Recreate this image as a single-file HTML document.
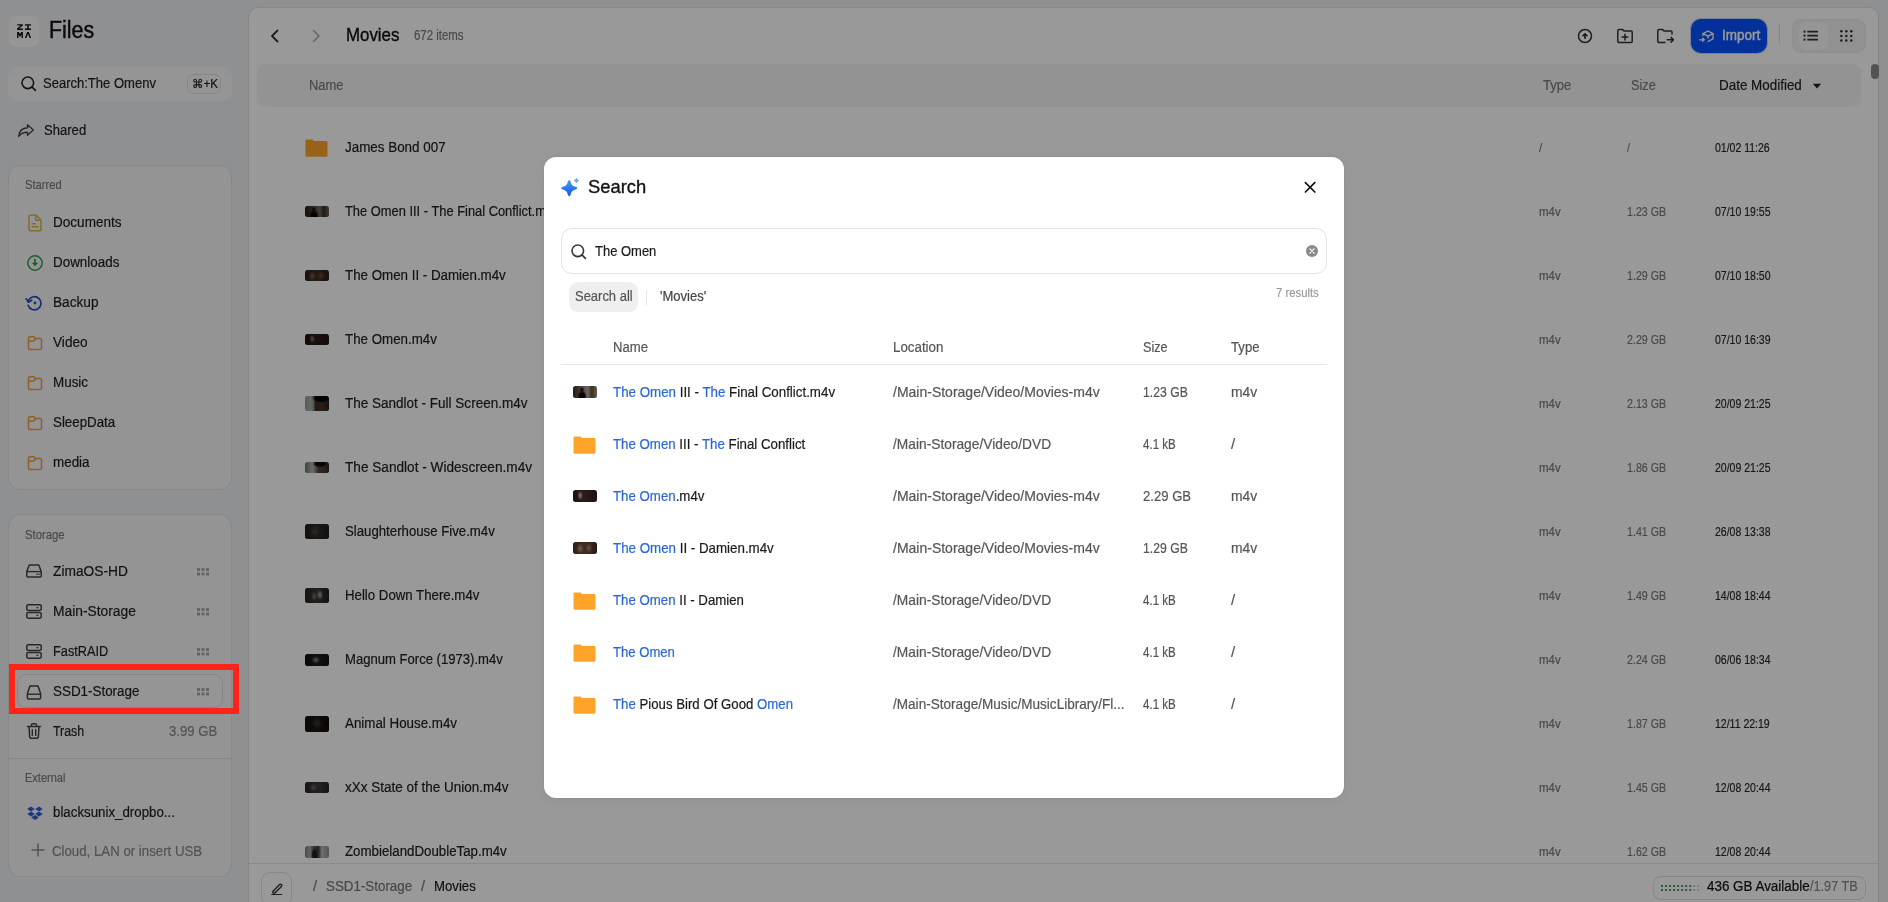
<!DOCTYPE html>
<html><head><meta charset="utf-8"><title>Files</title>
<style>
html,body{margin:0;padding:0;}
body{width:1888px;height:902px;position:relative;overflow:hidden;background:#eff0f2;font-family:"Liberation Sans", sans-serif;}
.t{position:absolute;white-space:nowrap;line-height:1;transform-origin:0 0;-webkit-text-stroke-width:0.2px;}
.g{filter:grayscale(1);}
.c{filter:saturate(1.0001);}
svg{display:block;}
</style></head><body>
<div style="position:absolute;left:9px;top:16px;width:30px;height:31px;background:#fbfbfb;border-radius:7px;box-shadow:0 0 0 1px #f0f0f0;"></div>
<svg style="position:absolute;left:17px;top:24px;" width="14" height="14" viewBox="0 0 14 14" fill="none"><path d="M0.3 0.2H5.8V1.5L2.2 4.5H5.9V5.9H0.1V4.6L3.7 1.6H0.3Z" fill="#111"/><path d="M7.9 0.2H14V1.6H11.7V4.5H14V5.9H7.9V4.5H10.2V1.6H7.9Z" fill="#111"/><path d="M0.1 14V8H1.9L3 10.3L4.1 8H5.9V14H4.5V10.6L3 13L1.5 10.6V14Z" fill="#111"/><path d="M7.9 14L10.1 8H11.9L14.1 14H12.6L11 9.8L9.4 14Z" fill="#111"/></svg>
<div class="t c" style="left:48.50px;top:18.42px;font-size:24.08px;color:#111;transform:scaleX(0.8883);-webkit-text-stroke:0.45px #111;">Files</div>
<div style="position:absolute;left:8px;top:67px;width:224px;height:34px;background:#f8f8f8;border-radius:10px;"></div>
<svg style="position:absolute;left:20px;top:75px;" width="17" height="17" viewBox="0 0 17 17" fill="none"><circle cx="7.8" cy="7.8" r="5.8" stroke="#222" stroke-width="1.6"/><path d="M12.2 12.2L15.4 15.4" stroke="#222" stroke-width="1.7" stroke-linecap="round"/></svg>
<div class="t c" style="left:43.00px;top:75.77px;font-size:14.45px;color:#1f1f1f;transform:scaleX(0.9019);">Search:The Omenv</div>
<div style="position:absolute;left:187px;top:74px;width:34px;height:20px;border:1px solid #e0e0e0;border-radius:6px;box-sizing:border-box;background:#f8f8f8;"></div>
<div class="t c" style="left:192.40px;top:77.98px;font-size:12.31px;color:#222;transform:scaleX(0.9508);">&#8984;+K</div>
<svg style="position:absolute;left:17px;top:123px;" width="18" height="15" viewBox="0 0 18 15" fill="none"><path d="M10.5 1.8L16.3 7L10.5 12.2V9.2C6.2 9.2 3.6 10.4 1.6 13.4C2 8.8 4.8 5.2 10.5 4.8Z" stroke="#444" stroke-width="1.4" stroke-linejoin="round"/></svg>
<div class="t c" style="left:44.30px;top:123.27px;font-size:14.45px;color:#1f1f1f;transform:scaleX(0.9056);">Shared</div>
<div style="position:absolute;left:8px;top:165px;width:224px;height:325px;background:#f7f7f7;border:1px solid #e2e2e2;border-radius:12px;box-sizing:border-box;"></div>
<div class="t c" style="left:25.20px;top:179.13px;font-size:12.84px;color:#7a7a7a;transform:scaleX(0.8757);">Starred</div>
<div class="t c" style="left:52.90px;top:214.77px;font-size:14.45px;color:#1f1f1f;transform:scaleX(0.9387);">Documents</div>
<div class="t c" style="left:52.90px;top:254.77px;font-size:14.45px;color:#1f1f1f;transform:scaleX(0.9288);">Downloads</div>
<div class="t c" style="left:52.90px;top:294.77px;font-size:14.45px;color:#1f1f1f;transform:scaleX(0.9461);">Backup</div>
<div class="t c" style="left:52.90px;top:334.77px;font-size:14.45px;color:#1f1f1f;transform:scaleX(0.9456);">Video</div>
<div class="t c" style="left:52.90px;top:374.77px;font-size:14.45px;color:#1f1f1f;transform:scaleX(0.9302);">Music</div>
<div class="t c" style="left:52.90px;top:414.77px;font-size:14.45px;color:#1f1f1f;transform:scaleX(0.9217);">SleepData</div>
<div class="t c" style="left:52.90px;top:454.77px;font-size:14.45px;color:#1f1f1f;transform:scaleX(0.9299);">media</div>
<svg style="position:absolute;left:26px;top:214px;" width="18" height="18" viewBox="0 0 18 18" fill="none"><path d="M3 2.4C3 1.7 3.5 1.2 4.2 1.2H10.2L15 6V15.6C15 16.3 14.5 16.8 13.8 16.8H4.2C3.5 16.8 3 16.3 3 15.6Z" stroke="#d8b24a" stroke-width="1.5" stroke-linejoin="round"/><path d="M9.8 1.5V6.3H14.7" stroke="#d8b24a" stroke-width="1.4"/><path d="M6 9.8H9M6 12.8H12" stroke="#d8b24a" stroke-width="1.5" stroke-linecap="round"/></svg>
<svg style="position:absolute;left:26px;top:254px;" width="18" height="18" viewBox="0 0 18 18" fill="none"><circle cx="9" cy="9" r="7.2" stroke="#2f9e58" stroke-width="1.5"/><path d="M9 5.4V9.6" stroke="#2f9e58" stroke-width="1.7" stroke-linecap="round"/><path d="M6.3 8.9L9 11.9L11.7 8.9Z" fill="#2f9e58" stroke="#2f9e58" stroke-width="0.6" stroke-linejoin="round"/></svg>
<svg style="position:absolute;left:25px;top:294px;" width="19" height="18" viewBox="0 0 19 18" fill="none"><path d="M3.6 6.2A6.6 6.6 0 1 1 3.2 11.4" stroke="#1f4fc9" stroke-width="1.7" stroke-linecap="round"/><path d="M1.2 4.8L3.4 8.2L6.6 6.2" stroke="#1f4fc9" stroke-width="1.7" stroke-linecap="round" stroke-linejoin="round"/><circle cx="10" cy="9" r="1.4" fill="#1f4fc9"/></svg>
<svg style="position:absolute;left:26px;top:334px;" width="18" height="18" viewBox="0 0 18 18" fill="none"><path d="M2.5 14.2V4C2.5 3.2 3 2.7 3.8 2.7H7.4C7.9 2.7 8.2 2.9 8.5 3.3L9.3 4.5H14.2C15 4.5 15.5 5 15.5 5.8V14.2C15.5 15 15 15.5 14.2 15.5H3.8C3 15.5 2.5 15 2.5 14.2Z" stroke="#e8a24c" stroke-width="1.5" stroke-linejoin="round"/><path d="M2.6 7H7.6C8 7 8.3 6.8 8.5 6.5L9.4 4.6" stroke="#e8a24c" stroke-width="1.4" stroke-linejoin="round"/></svg>
<svg style="position:absolute;left:26px;top:374px;" width="18" height="18" viewBox="0 0 18 18" fill="none"><path d="M2.5 14.2V4C2.5 3.2 3 2.7 3.8 2.7H7.4C7.9 2.7 8.2 2.9 8.5 3.3L9.3 4.5H14.2C15 4.5 15.5 5 15.5 5.8V14.2C15.5 15 15 15.5 14.2 15.5H3.8C3 15.5 2.5 15 2.5 14.2Z" stroke="#e8a24c" stroke-width="1.5" stroke-linejoin="round"/><path d="M2.6 7H7.6C8 7 8.3 6.8 8.5 6.5L9.4 4.6" stroke="#e8a24c" stroke-width="1.4" stroke-linejoin="round"/></svg>
<svg style="position:absolute;left:26px;top:414px;" width="18" height="18" viewBox="0 0 18 18" fill="none"><path d="M2.5 14.2V4C2.5 3.2 3 2.7 3.8 2.7H7.4C7.9 2.7 8.2 2.9 8.5 3.3L9.3 4.5H14.2C15 4.5 15.5 5 15.5 5.8V14.2C15.5 15 15 15.5 14.2 15.5H3.8C3 15.5 2.5 15 2.5 14.2Z" stroke="#e8a24c" stroke-width="1.5" stroke-linejoin="round"/><path d="M2.6 7H7.6C8 7 8.3 6.8 8.5 6.5L9.4 4.6" stroke="#e8a24c" stroke-width="1.4" stroke-linejoin="round"/></svg>
<svg style="position:absolute;left:26px;top:454px;" width="18" height="18" viewBox="0 0 18 18" fill="none"><path d="M2.5 14.2V4C2.5 3.2 3 2.7 3.8 2.7H7.4C7.9 2.7 8.2 2.9 8.5 3.3L9.3 4.5H14.2C15 4.5 15.5 5 15.5 5.8V14.2C15.5 15 15 15.5 14.2 15.5H3.8C3 15.5 2.5 15 2.5 14.2Z" stroke="#e8a24c" stroke-width="1.5" stroke-linejoin="round"/><path d="M2.6 7H7.6C8 7 8.3 6.8 8.5 6.5L9.4 4.6" stroke="#e8a24c" stroke-width="1.4" stroke-linejoin="round"/></svg>
<div style="position:absolute;left:8px;top:514px;width:224px;height:363px;background:#f7f7f7;border:1px solid #e2e2e2;border-radius:12px;box-sizing:border-box;"></div>
<div class="t c" style="left:25.40px;top:528.63px;font-size:12.84px;color:#7a7a7a;transform:scaleX(0.8798);">Storage</div>
<div style="position:absolute;left:8px;top:758px;width:224px;height:1px;background:#e2e2e2;"></div>
<div style="position:absolute;left:17px;top:674px;width:206px;height:34px;background:#f9f9f9;border:1px solid #dedede;border-radius:9px;box-sizing:border-box;"></div>
<div class="t c" style="left:53.00px;top:563.77px;font-size:14.45px;color:#1f1f1f;transform:scaleX(0.9521);">ZimaOS-HD</div>
<svg style="position:absolute;left:197px;top:567.5px;" width="13" height="8" viewBox="0 0 13 8" fill="none"><rect x="0.0" y="0.0" width="3" height="3" fill="#ababab"/><rect x="0.0" y="4.5" width="3" height="3" fill="#ababab"/><rect x="4.5" y="0.0" width="3" height="3" fill="#ababab"/><rect x="4.5" y="4.5" width="3" height="3" fill="#ababab"/><rect x="9.0" y="0.0" width="3" height="3" fill="#ababab"/><rect x="9.0" y="4.5" width="3" height="3" fill="#ababab"/></svg>
<div class="t c" style="left:53.00px;top:603.77px;font-size:14.45px;color:#1f1f1f;transform:scaleX(0.9557);">Main-Storage</div>
<svg style="position:absolute;left:197px;top:607.5px;" width="13" height="8" viewBox="0 0 13 8" fill="none"><rect x="0.0" y="0.0" width="3" height="3" fill="#ababab"/><rect x="0.0" y="4.5" width="3" height="3" fill="#ababab"/><rect x="4.5" y="0.0" width="3" height="3" fill="#ababab"/><rect x="4.5" y="4.5" width="3" height="3" fill="#ababab"/><rect x="9.0" y="0.0" width="3" height="3" fill="#ababab"/><rect x="9.0" y="4.5" width="3" height="3" fill="#ababab"/></svg>
<div class="t c" style="left:53.00px;top:643.77px;font-size:14.45px;color:#1f1f1f;transform:scaleX(0.8830);">FastRAID</div>
<svg style="position:absolute;left:197px;top:647.5px;" width="13" height="8" viewBox="0 0 13 8" fill="none"><rect x="0.0" y="0.0" width="3" height="3" fill="#ababab"/><rect x="0.0" y="4.5" width="3" height="3" fill="#ababab"/><rect x="4.5" y="0.0" width="3" height="3" fill="#ababab"/><rect x="4.5" y="4.5" width="3" height="3" fill="#ababab"/><rect x="9.0" y="0.0" width="3" height="3" fill="#ababab"/><rect x="9.0" y="4.5" width="3" height="3" fill="#ababab"/></svg>
<div class="t c" style="left:53.00px;top:683.77px;font-size:14.45px;color:#1f1f1f;transform:scaleX(0.9284);">SSD1-Storage</div>
<svg style="position:absolute;left:197px;top:687.5px;" width="13" height="8" viewBox="0 0 13 8" fill="none"><rect x="0.0" y="0.0" width="3" height="3" fill="#ababab"/><rect x="0.0" y="4.5" width="3" height="3" fill="#ababab"/><rect x="4.5" y="0.0" width="3" height="3" fill="#ababab"/><rect x="4.5" y="4.5" width="3" height="3" fill="#ababab"/><rect x="9.0" y="0.0" width="3" height="3" fill="#ababab"/><rect x="9.0" y="4.5" width="3" height="3" fill="#ababab"/></svg>
<svg style="position:absolute;left:25px;top:563px;" width="18" height="16" viewBox="0 0 18 16" fill="none"><path d="M4.2 2H13.8L16.2 8.6V13C16.2 13.6 15.8 14 15.2 14H2.8C2.2 14 1.8 13.6 1.8 13V8.6Z" stroke="#444" stroke-width="1.5" stroke-linejoin="round"/><path d="M1.9 8.6H16.1" stroke="#444" stroke-width="1.4"/><circle cx="12" cy="11.3" r="0.8" fill="#444"/><circle cx="14" cy="11.3" r="0.8" fill="#444"/></svg>
<svg style="position:absolute;left:25px;top:602.5px;" width="18" height="17" viewBox="0 0 18 17" fill="none"><rect x="1.8" y="1.8" width="14.4" height="5.6" rx="1.4" stroke="#444" stroke-width="1.5"/><rect x="1.8" y="9.6" width="14.4" height="5.6" rx="1.4" stroke="#444" stroke-width="1.5"/><path d="M11.5 4.6H13.3M11.5 12.4H13.3" stroke="#444" stroke-width="1.3"/></svg>
<svg style="position:absolute;left:25px;top:642.5px;" width="18" height="17" viewBox="0 0 18 17" fill="none"><rect x="1.8" y="1.8" width="14.4" height="5.6" rx="1.4" stroke="#444" stroke-width="1.5"/><rect x="1.8" y="9.6" width="14.4" height="5.6" rx="1.4" stroke="#444" stroke-width="1.5"/><path d="M11.5 4.6H13.3M11.5 12.4H13.3" stroke="#444" stroke-width="1.3"/></svg>
<svg style="position:absolute;left:25px;top:684px;" width="18" height="17" viewBox="0 0 18 17" fill="none"><path d="M5 2H13L15.6 9.6V14C15.6 14.6 15.2 15 14.6 15H3.4C2.8 15 2.4 14.6 2.4 14V9.6Z" stroke="#444" stroke-width="1.5" stroke-linejoin="round"/><path d="M2.6 10.2H15.4" stroke="#444" stroke-width="1.4"/></svg>
<div class="t c" style="left:53.30px;top:723.77px;font-size:14.45px;color:#1f1f1f;transform:scaleX(0.8571);">Trash</div>
<div class="t c" style="left:168.50px;top:723.77px;font-size:14.45px;color:#8a8a8a;transform:scaleX(0.9091);">3.99 GB</div>
<svg style="position:absolute;left:25px;top:722px;" width="18" height="18" viewBox="0 0 18 18" fill="none"><path d="M2.5 4.5H15.5" stroke="#444" stroke-width="1.5" stroke-linecap="round"/><path d="M6.5 4.2V2.6C6.5 2.1 6.9 1.7 7.4 1.7H10.6C11.1 1.7 11.5 2.1 11.5 2.6V4.2" stroke="#444" stroke-width="1.4"/><path d="M4 4.8L4.7 15.2C4.8 15.9 5.2 16.3 5.9 16.3H12.1C12.8 16.3 13.2 15.9 13.3 15.2L14 4.8" stroke="#444" stroke-width="1.5"/><path d="M7.3 7.6V13.4M10.7 7.6V13.4" stroke="#444" stroke-width="1.4" stroke-linecap="round"/></svg>
<div class="t c" style="left:25.00px;top:772.13px;font-size:12.84px;color:#7a7a7a;transform:scaleX(0.8591);">External</div>
<svg style="position:absolute;left:26px;top:805px;" width="18" height="16" viewBox="0 0 18 16" fill="none"><path d="M5 1.6L1.2 4.1L5 6.6L8.8 4.1ZM13 1.6L9.2 4.1L13 6.6L16.8 4.1ZM5 6.6L1.2 9.1L5 11.6L8.8 9.1ZM13 6.6L9.2 9.1L13 11.6L16.8 9.1ZM9 9.9L5.2 12.4L9 14.9L12.8 12.4Z" fill="#2f5fd0"/></svg>
<div class="t c" style="left:53.30px;top:804.77px;font-size:14.45px;color:#1f1f1f;transform:scaleX(0.9205);">blacksunix_dropbo...</div>
<svg style="position:absolute;left:30px;top:842px;" width="16" height="16" viewBox="0 0 16 16" fill="none"><path d="M8 1.5V14.5M1.5 8H14.5" stroke="#888" stroke-width="1.5"/></svg>
<div class="t c" style="left:52.00px;top:843.77px;font-size:14.45px;color:#8a8a8a;transform:scaleX(0.9174);">Cloud, LAN or insert USB</div>
<div style="position:absolute;left:248px;top:7px;width:1631px;height:920px;background:#fff;border:1px solid #e2e2e2;border-radius:10px;box-sizing:border-box;"></div>
<svg style="position:absolute;left:268px;top:28px;" width="14" height="16" viewBox="0 0 14 16" fill="none"><path d="M9.5 2.5L4 8L9.5 13.5" stroke="#333" stroke-width="1.8" stroke-linecap="round" stroke-linejoin="round"/></svg>
<svg style="position:absolute;left:309px;top:28px;" width="14" height="16" viewBox="0 0 14 16" fill="none"><path d="M4.5 2.5L10 8L4.5 13.5" stroke="#aaa" stroke-width="1.6" stroke-linecap="round" stroke-linejoin="round"/></svg>
<div class="t c" style="left:345.60px;top:24.70px;font-size:19.26px;color:#111;transform:scaleX(0.8758);-webkit-text-stroke-width:0.4px;">Movies</div>
<div class="t c" style="left:413.80px;top:29.23px;font-size:13.91px;color:#7a7a7a;transform:scaleX(0.8214);">672 items</div>
<svg style="position:absolute;left:1576px;top:27px;" width="18" height="18" viewBox="0 0 18 18" fill="none"><circle cx="9" cy="9" r="6.5" stroke="#333" stroke-width="1.5"/><path d="M6.1 8.9L9 6L11.9 8.9Z" fill="#333" stroke="#333" stroke-width="0.6" stroke-linejoin="round"/><path d="M9 8.2V11.8" stroke="#333" stroke-width="1.8"/></svg>
<svg style="position:absolute;left:1616px;top:27px;" width="18" height="18" viewBox="0 0 18 18" fill="none"><path d="M1.8 3.5C1.8 2.9 2.2 2.5 2.8 2.5H6.6L8 3.9H15.2C15.8 3.9 16.2 4.3 16.2 4.9V14.6C16.2 15.2 15.8 15.6 15.2 15.6H2.8C2.2 15.6 1.8 15.2 1.8 14.6Z" stroke="#333" stroke-width="1.5" stroke-linejoin="round"/><path d="M9 7.2V13M6.1 10.1H11.9" stroke="#333" stroke-width="1.5" stroke-linecap="round"/></svg>
<svg style="position:absolute;left:1656px;top:27px;" width="19" height="18" viewBox="0 0 19 18" fill="none"><path d="M16 7.5V4.9C16 4.3 15.6 3.9 15 3.9H8L6.6 2.5H2.8C2.2 2.5 1.8 2.9 1.8 3.5V14.6C1.8 15.2 2.2 15.6 2.8 15.6H9.5" stroke="#333" stroke-width="1.5" stroke-linejoin="round"/><path d="M11.2 12.8H17.4M15 10.4L17.5 12.8L15 15.2" stroke="#333" stroke-width="1.5" stroke-linecap="round" stroke-linejoin="round"/></svg>
<div style="position:absolute;left:1691px;top:19px;width:76px;height:34px;background:#0653ff;border-radius:10px;box-shadow:0 0 0 1px rgba(170,195,255,.7);"></div>
<svg style="position:absolute;left:1698px;top:27px;" width="19" height="18" viewBox="0 0 19 18" fill="none"><path d="M5 6.6L10 4L15 6.6L10 9.2Z" stroke="#fff" stroke-width="1.3" stroke-linejoin="round"/><path d="M5 6.6V8.6M15 6.6V11.9L10 14.5M10 9.2V11" stroke="#fff" stroke-width="1.3" stroke-linejoin="round" stroke-linecap="round"/><path d="M1.5 12.8H6.2M4.6 11.2L6.3 12.8L4.6 14.4" stroke="#fff" stroke-width="1.3" stroke-linecap="round" stroke-linejoin="round"/></svg>
<div class="t c" style="left:1721.60px;top:27.32px;font-size:14.98px;color:#fff;transform:scaleX(0.8986);-webkit-text-stroke-width:0.45px;">Import</div>
<div style="position:absolute;left:1779px;top:24px;width:1px;height:20px;background:#e0e0e0;"></div>
<div style="position:absolute;left:1792px;top:19px;width:74px;height:34px;background:#f2f2f2;border:1px solid #ececec;border-radius:9px;box-sizing:border-box;"></div>
<div style="position:absolute;left:1799px;top:21.5px;width:29px;height:28px;background:#fafafa;border-radius:7px;"></div>
<svg style="position:absolute;left:1803px;top:30px;" width="16" height="12" viewBox="0 0 16 12" fill="none"><rect x="0.5" y="0.6" width="2" height="2" fill="#333"/><rect x="0.5" y="4.6" width="2" height="2" fill="#333"/><rect x="0.5" y="8.6" width="2" height="2" fill="#333"/><path d="M4.3 1.6H15M4.3 5.6H15M4.3 9.6H15" stroke="#333" stroke-width="1.9"/></svg>
<svg style="position:absolute;left:1840px;top:30px;" width="14" height="12" viewBox="0 0 14 12" fill="none"><circle cx="1.3" cy="1.3" r="1.25" fill="#333"/><circle cx="1.3" cy="5.9" r="1.25" fill="#333"/><circle cx="1.3" cy="10.5" r="1.25" fill="#333"/><circle cx="6.3" cy="1.3" r="1.25" fill="#333"/><circle cx="6.3" cy="5.9" r="1.25" fill="#333"/><circle cx="6.3" cy="10.5" r="1.25" fill="#333"/><circle cx="11.3" cy="1.3" r="1.25" fill="#333"/><circle cx="11.3" cy="5.9" r="1.25" fill="#333"/><circle cx="11.3" cy="10.5" r="1.25" fill="#333"/></svg>
<div style="position:absolute;left:1871px;top:64px;width:7.5px;height:15px;background:#8a8a8a;border-radius:4px;"></div>
<div style="position:absolute;left:257px;top:64px;width:1605px;height:43px;background:#f5f5f5;border-radius:9px;"></div>
<div class="t c" style="left:309.40px;top:77.77px;font-size:14.45px;color:#7a7a7a;transform:scaleX(0.8925);">Name</div>
<div class="t c" style="left:1542.80px;top:77.77px;font-size:14.45px;color:#7a7a7a;transform:scaleX(0.9002);">Type</div>
<div class="t c" style="left:1631.00px;top:77.77px;font-size:14.45px;color:#7a7a7a;transform:scaleX(0.8822);">Size</div>
<div class="t c" style="left:1719.00px;top:77.32px;font-size:14.98px;color:#222;transform:scaleX(0.8968);">Date Modified</div>
<svg style="position:absolute;left:1812px;top:83px;" width="10" height="6" viewBox="0 0 10 6" fill="none"><path d="M0.8 0.8H9.2L5 5.4Z" fill="#222"/></svg>
<svg style="position:absolute;left:305px;top:139px;" width="23" height="18" viewBox="0 0 23 18" fill="none"><path d="M0.5 1.8C0.5 1 1 0.5 1.8 0.5H7.4L9 2H21C21.8 2 22.5 2.6 22.5 3.4V16.4C22.5 17.2 21.9 17.8 21.1 17.8H1.9C1.1 17.8 0.5 17.2 0.5 16.4Z" fill="#ffa42a"/></svg>
<div class="t c" style="left:345.00px;top:139.77px;font-size:14.45px;color:#222;transform:scaleX(0.9286);">James Bond 007</div>
<div class="t c" style="left:1539.00px;top:141.17px;font-size:13.38px;color:#777;transform:scaleX(0.8582);">/</div>
<div class="t c" style="left:1627.00px;top:141.17px;font-size:13.38px;color:#7a7a7a;transform:scaleX(0.7985);">/</div>
<div class="t c" style="left:1715.00px;top:141.17px;font-size:13.38px;color:#2a2a2a;transform:scaleX(0.7854);">01/02 11:26</div>
<div style="position:absolute;left:305px;top:205.75px;width:24px;height:11.5px;background:radial-gradient(ellipse 20% 55% at 38% 88%,#080604 55%,rgba(8,6,4,0) 100%),radial-gradient(ellipse 10% 22% at 37% 30%,#1a1410 50%,rgba(0,0,0,0) 100%),linear-gradient(90deg,#221c12 0%,#3a3428 22%,#5e5650 48%,#6e665e 62%,#3a2e20 78%,#6a5e50 100%);border-radius:2.5px;"></div>
<div class="t c" style="left:345.00px;top:203.77px;font-size:14.45px;color:#222;transform:scaleX(0.8922);">The Omen III - The Final Conflict.m4v</div>
<div class="t c" style="left:1539.00px;top:205.17px;font-size:13.38px;color:#777;transform:scaleX(0.8582);">m4v</div>
<div class="t c" style="left:1627.00px;top:205.17px;font-size:13.38px;color:#7a7a7a;transform:scaleX(0.7985);">1.23 GB</div>
<div class="t c" style="left:1715.00px;top:205.17px;font-size:13.38px;color:#2a2a2a;transform:scaleX(0.7854);">07/10 19:55</div>
<div style="position:absolute;left:305px;top:269.7px;width:24px;height:11.6px;background:radial-gradient(ellipse 16% 45% at 30% 55%,#7a5a48 0%,rgba(0,0,0,0) 100%),radial-gradient(ellipse 16% 45% at 66% 50%,#6a4c3a 0%,rgba(0,0,0,0) 100%),linear-gradient(90deg,#2e2018,#3e2c22 50%,#2a1c16);border-radius:2.5px;"></div>
<div class="t c" style="left:345.00px;top:267.77px;font-size:14.45px;color:#222;transform:scaleX(0.9234);">The Omen II - Damien.m4v</div>
<div class="t c" style="left:1539.00px;top:269.17px;font-size:13.38px;color:#777;transform:scaleX(0.8582);">m4v</div>
<div class="t c" style="left:1627.00px;top:269.17px;font-size:13.38px;color:#7a7a7a;transform:scaleX(0.7985);">1.29 GB</div>
<div class="t c" style="left:1715.00px;top:269.17px;font-size:13.38px;color:#2a2a2a;transform:scaleX(0.7854);">07/10 18:50</div>
<div style="position:absolute;left:305px;top:333.7px;width:24px;height:11.6px;background:radial-gradient(ellipse 12% 40% at 30% 45%,#8a7a70 0%,rgba(0,0,0,0) 100%),linear-gradient(90deg,#1c1210,#2e1c18 50%,#1a1210);border-radius:2.5px;"></div>
<div class="t c" style="left:345.00px;top:331.77px;font-size:14.45px;color:#222;transform:scaleX(0.9229);">The Omen.m4v</div>
<div class="t c" style="left:1539.00px;top:333.17px;font-size:13.38px;color:#777;transform:scaleX(0.8582);">m4v</div>
<div class="t c" style="left:1627.00px;top:333.17px;font-size:13.38px;color:#7a7a7a;transform:scaleX(0.7985);">2.29 GB</div>
<div class="t c" style="left:1715.00px;top:333.17px;font-size:13.38px;color:#2a2a2a;transform:scaleX(0.7854);">07/10 16:39</div>
<div style="position:absolute;left:305px;top:396.0px;width:24px;height:15px;background:radial-gradient(ellipse 40% 35% at 68% 12%,#080606 60%,rgba(0,0,0,0) 100%),linear-gradient(90deg,#909a90 0%,#a8b0a8 25%,#8a908a 36%,#3e2a22 44%,#4a3228 70%,#22201a 100%);border-radius:2.5px;"></div>
<div class="t c" style="left:345.00px;top:395.77px;font-size:14.45px;color:#222;transform:scaleX(0.9356);">The Sandlot - Full Screen.m4v</div>
<div class="t c" style="left:1539.00px;top:397.17px;font-size:13.38px;color:#777;transform:scaleX(0.8582);">m4v</div>
<div class="t c" style="left:1627.00px;top:397.17px;font-size:13.38px;color:#7a7a7a;transform:scaleX(0.7985);">2.13 GB</div>
<div class="t c" style="left:1715.00px;top:397.17px;font-size:13.38px;color:#2a2a2a;transform:scaleX(0.7854);">20/09 21:25</div>
<div style="position:absolute;left:305px;top:461.7px;width:24px;height:11.6px;background:radial-gradient(ellipse 30% 35% at 62% 15%,#0a0808 60%,rgba(0,0,0,0) 100%),linear-gradient(90deg,#6a7068 0%,#b0b6ae 30%,#8a8a84 42%,#5a4232 55%,#4a3a30 80%,#2a2420 100%);border-radius:2.5px;"></div>
<div class="t c" style="left:345.00px;top:459.77px;font-size:14.45px;color:#222;transform:scaleX(0.9437);">The Sandlot - Widescreen.m4v</div>
<div class="t c" style="left:1539.00px;top:461.17px;font-size:13.38px;color:#777;transform:scaleX(0.8582);">m4v</div>
<div class="t c" style="left:1627.00px;top:461.17px;font-size:13.38px;color:#7a7a7a;transform:scaleX(0.7985);">1.86 GB</div>
<div class="t c" style="left:1715.00px;top:461.17px;font-size:13.38px;color:#2a2a2a;transform:scaleX(0.7854);">20/09 21:25</div>
<div style="position:absolute;left:305px;top:523.75px;width:24px;height:15.5px;background:radial-gradient(ellipse 20% 40% at 40% 50%,#4a4440 0%,rgba(0,0,0,0) 100%),linear-gradient(90deg,#1e1c1a,#2e2a28 50%,#1e1c1a);border-radius:2.5px;"></div>
<div class="t c" style="left:345.00px;top:523.77px;font-size:14.45px;color:#222;transform:scaleX(0.9148);">Slaughterhouse Five.m4v</div>
<div class="t c" style="left:1539.00px;top:525.17px;font-size:13.38px;color:#777;transform:scaleX(0.8582);">m4v</div>
<div class="t c" style="left:1627.00px;top:525.17px;font-size:13.38px;color:#7a7a7a;transform:scaleX(0.7985);">1.41 GB</div>
<div class="t c" style="left:1715.00px;top:525.17px;font-size:13.38px;color:#2a2a2a;transform:scaleX(0.7854);">26/08 13:38</div>
<div style="position:absolute;left:305px;top:587.75px;width:24px;height:15.5px;background:radial-gradient(ellipse 14% 35% at 62% 45%,#b0a89e 0%,rgba(0,0,0,0) 100%),radial-gradient(ellipse 14% 35% at 38% 55%,#7a706a 0%,rgba(0,0,0,0) 100%),linear-gradient(90deg,#222,#3a3632 50%,#1e1e1c);border-radius:2.5px;"></div>
<div class="t c" style="left:345.00px;top:587.77px;font-size:14.45px;color:#222;transform:scaleX(0.9168);">Hello Down There.m4v</div>
<div class="t c" style="left:1539.00px;top:589.17px;font-size:13.38px;color:#777;transform:scaleX(0.8582);">m4v</div>
<div class="t c" style="left:1627.00px;top:589.17px;font-size:13.38px;color:#7a7a7a;transform:scaleX(0.7985);">1.49 GB</div>
<div class="t c" style="left:1715.00px;top:589.17px;font-size:13.38px;color:#2a2a2a;transform:scaleX(0.7854);">14/08 18:44</div>
<div style="position:absolute;left:305px;top:653.5px;width:24px;height:12px;background:radial-gradient(ellipse 18% 30% at 45% 50%,#8a8a86 0%,rgba(0,0,0,0) 100%),linear-gradient(90deg,#0e0e0e,#1e1e1e 50%,#101010);border-radius:2.5px;"></div>
<div class="t c" style="left:345.00px;top:651.77px;font-size:14.45px;color:#222;transform:scaleX(0.9061);">Magnum Force (1973).m4v</div>
<div class="t c" style="left:1539.00px;top:653.17px;font-size:13.38px;color:#777;transform:scaleX(0.8582);">m4v</div>
<div class="t c" style="left:1627.00px;top:653.17px;font-size:13.38px;color:#7a7a7a;transform:scaleX(0.7985);">2.24 GB</div>
<div class="t c" style="left:1715.00px;top:653.17px;font-size:13.38px;color:#2a2a2a;transform:scaleX(0.7854);">06/06 18:34</div>
<div style="position:absolute;left:305px;top:715.5px;width:24px;height:16px;background:radial-gradient(ellipse 25% 35% at 50% 45%,#3a3430 0%,rgba(0,0,0,0) 100%),linear-gradient(90deg,#100c0a,#1c1614 50%,#0e0a08);border-radius:2.5px;"></div>
<div class="t c" style="left:345.00px;top:715.77px;font-size:14.45px;color:#222;transform:scaleX(0.9244);">Animal House.m4v</div>
<div class="t c" style="left:1539.00px;top:717.17px;font-size:13.38px;color:#777;transform:scaleX(0.8582);">m4v</div>
<div class="t c" style="left:1627.00px;top:717.17px;font-size:13.38px;color:#7a7a7a;transform:scaleX(0.7985);">1.87 GB</div>
<div class="t c" style="left:1715.00px;top:717.17px;font-size:13.38px;color:#2a2a2a;transform:scaleX(0.7854);">12/11 22:19</div>
<div style="position:absolute;left:305px;top:781.75px;width:24px;height:11.5px;background:radial-gradient(ellipse 18% 40% at 35% 50%,#6a625c 0%,rgba(0,0,0,0) 100%),linear-gradient(90deg,#262422,#3a3634 60%,#242220);border-radius:2.5px;"></div>
<div class="t c" style="left:345.00px;top:779.77px;font-size:14.45px;color:#222;transform:scaleX(0.9349);">xXx State of the Union.m4v</div>
<div class="t c" style="left:1539.00px;top:781.17px;font-size:13.38px;color:#777;transform:scaleX(0.8582);">m4v</div>
<div class="t c" style="left:1627.00px;top:781.17px;font-size:13.38px;color:#7a7a7a;transform:scaleX(0.7985);">1.45 GB</div>
<div class="t c" style="left:1715.00px;top:781.17px;font-size:13.38px;color:#2a2a2a;transform:scaleX(0.7854);">12/08 20:44</div>
<div style="position:absolute;left:305px;top:845.5px;width:24px;height:12px;background:radial-gradient(ellipse 14% 60% at 40% 75%,#1e1e1e 60%,rgba(0,0,0,0) 100%),linear-gradient(90deg,#7a8084 0%,#a6acb0 20%,#5a5e60 35%,#3a3a3a 55%,#b6babc 70%,#8a8e90 100%);border-radius:2.5px;"></div>
<div class="t c" style="left:345.00px;top:843.77px;font-size:14.45px;color:#222;transform:scaleX(0.9204);">ZombielandDoubleTap.m4v</div>
<div class="t c" style="left:1539.00px;top:845.17px;font-size:13.38px;color:#777;transform:scaleX(0.8582);">m4v</div>
<div class="t c" style="left:1627.00px;top:845.17px;font-size:13.38px;color:#7a7a7a;transform:scaleX(0.7985);">1.62 GB</div>
<div class="t c" style="left:1715.00px;top:845.17px;font-size:13.38px;color:#2a2a2a;transform:scaleX(0.7854);">12/08 20:44</div>
<div style="position:absolute;left:249px;top:863px;width:1629px;height:1px;background:#e6e6e6;"></div>
<div style="position:absolute;left:261px;top:872px;width:31px;height:34px;border:1px solid #e3e3e3;border-radius:9px;box-sizing:border-box;"></div>
<svg style="position:absolute;left:270px;top:881px;" width="14" height="14" viewBox="0 0 14 14" fill="none"><path d="M3 10.2L9.6 3.6C10.1 3.1 10.9 3.1 11.4 3.6C11.9 4.1 11.9 4.9 11.4 5.4L4.8 12H3Z" stroke="#333" stroke-width="1.4" stroke-linejoin="round"/><path d="M1.8 13.6H11.5" stroke="#333" stroke-width="1.4" stroke-linecap="round"/></svg>
<div class="t c" style="left:312.90px;top:878.77px;font-size:14.45px;color:#777;transform:scaleX(0.9990);">/</div>
<div class="t c" style="left:326.00px;top:878.77px;font-size:14.45px;color:#777;transform:scaleX(0.9252);">SSD1-Storage</div>
<div class="t c" style="left:420.80px;top:878.77px;font-size:14.45px;color:#777;transform:scaleX(0.9990);">/</div>
<div class="t c" style="left:434.00px;top:878.77px;font-size:14.45px;color:#1a1a1a;transform:scaleX(0.9133);">Movies</div>
<div style="position:absolute;left:1652.5px;top:875.5px;width:213.5px;height:24px;border:1px solid #e0e0e0;border-radius:8px;box-sizing:border-box;"></div>
<svg style="position:absolute;left:1661px;top:885px;" width="40" height="6" viewBox="0 0 40 6" fill="none"><rect x="0.00" y="0.0" width="2" height="2" fill="#4a9a68"/><rect x="0.00" y="4.0" width="2" height="2" fill="#4a9a68"/><rect x="4.03" y="0.0" width="2" height="2" fill="#4a9a68"/><rect x="4.03" y="4.0" width="2" height="2" fill="#4a9a68"/><rect x="8.06" y="0.0" width="2" height="2" fill="#4a9a68"/><rect x="8.06" y="4.0" width="2" height="2" fill="#4a9a68"/><rect x="12.09" y="0.0" width="2" height="2" fill="#4a9a68"/><rect x="12.09" y="4.0" width="2" height="2" fill="#4a9a68"/><rect x="16.12" y="0.0" width="2" height="2" fill="#4a9a68"/><rect x="16.12" y="4.0" width="2" height="2" fill="#4a9a68"/><rect x="20.15" y="0.0" width="2" height="2" fill="#4a9a68"/><rect x="20.15" y="4.0" width="2" height="2" fill="#4a9a68"/><rect x="24.18" y="0.0" width="2" height="2" fill="#4a9a68"/><rect x="24.18" y="4.0" width="2" height="2" fill="#4a9a68"/><rect x="28.21" y="0.0" width="2" height="2" fill="#4a9a68"/><rect x="28.21" y="4.0" width="2" height="2" fill="#4a9a68"/><rect x="32.24" y="0.0" width="2" height="2" fill="#cfcfcf"/><rect x="32.24" y="4.0" width="2" height="2" fill="#cfcfcf"/><rect x="36.27" y="0.0" width="2" height="2" fill="#cfcfcf"/><rect x="36.27" y="4.0" width="2" height="2" fill="#cfcfcf"/></svg>
<div class="t c" style="left:1707.20px;top:878.77px;font-size:14.45px;color:#111;transform:scaleX(0.9286);">436 GB Available</div>
<div class="t c" style="left:1809.90px;top:878.77px;font-size:14.45px;color:#8a8a8a;transform:scaleX(0.8775);">/1.97 TB</div>
<div style="position:absolute;left:0px;top:0px;width:1888px;height:902px;background:rgba(0,0,0,0.4);"></div>
<div style="position:absolute;left:9px;top:664px;width:230px;height:50px;border:6px solid #ff2318;box-sizing:border-box;"></div>
<div style="position:absolute;left:544px;top:157px;width:800px;height:641px;background:#fff;border-radius:12px;box-shadow:0 0 0 1px rgba(0,0,0,.025),0 2px 14px rgba(0,0,0,.05);"></div>
<svg style="position:absolute;left:557px;top:175px;" width="24" height="24" viewBox="0 0 24 24" fill="none"><defs><linearGradient id="sg" x1="0" y1="0" x2="0" y2="1"><stop offset="0" stop-color="#3d96ff"/><stop offset="1" stop-color="#1c5fd6"/></linearGradient></defs><path d="M12.2 6.499999999999999C13.399999999999999 10.7 14.7 12.0 18.9 13.2C14.7 14.399999999999999 13.399999999999999 15.7 12.2 19.9C11.0 15.7 9.7 14.399999999999999 5.499999999999999 13.2C9.7 12.0 11.0 10.7 12.2 6.499999999999999Z" fill="url(#sg)" stroke="url(#sg)" stroke-width="2.4" stroke-linejoin="round"/><path d="M19.4 3.4999999999999996C19.9 4.699999999999999 20.299999999999997 5.1 21.5 5.6C20.299999999999997 6.1 19.9 6.5 19.4 7.699999999999999C18.9 6.5 18.5 6.1 17.299999999999997 5.6C18.5 5.1 18.9 4.699999999999999 19.4 3.4999999999999996Z" fill="#5ea4e6" stroke="#5ea4e6" stroke-width="1" stroke-linejoin="round"/></svg>
<div class="t c" style="left:588.00px;top:177.66px;font-size:18.83px;color:#111;transform:scaleX(0.9761);-webkit-text-stroke-width:0.35px;">Search</div>
<svg style="position:absolute;left:1303px;top:180px;" width="14" height="14" viewBox="0 0 14 14" fill="none"><path d="M2.4 2.6L11.8 12M11.8 2.6L2.4 12" stroke="#111" stroke-width="1.7" stroke-linecap="round"/></svg>
<div style="position:absolute;left:561px;top:228px;width:766px;height:46px;border:1px solid #e2e2e2;border-radius:11px;box-sizing:border-box;"></div>
<svg style="position:absolute;left:570px;top:243px;" width="17" height="17" viewBox="0 0 17 17" fill="none"><circle cx="7.8" cy="7.8" r="5.8" stroke="#333" stroke-width="1.6"/><path d="M12.2 12.2L15.4 15.4" stroke="#333" stroke-width="1.7" stroke-linecap="round"/></svg>
<div class="t c" style="left:594.60px;top:243.77px;font-size:14.45px;color:#1a1a1a;transform:scaleX(0.8994);">The Omen</div>
<svg style="position:absolute;left:1305px;top:244px;" width="14" height="14" viewBox="0 0 14 14" fill="none"><circle cx="7" cy="7" r="6" fill="#8a8a8a"/><path d="M4.9 4.9L9.1 9.1M9.1 4.9L4.9 9.1" stroke="#fff" stroke-width="1.3" stroke-linecap="round"/></svg>
<div style="position:absolute;left:569px;top:282px;width:69px;height:30px;background:#efefef;border-radius:9px;"></div>
<div class="t c" style="left:574.60px;top:288.77px;font-size:14.45px;color:#555;transform:scaleX(0.8980);">Search all</div>
<div style="position:absolute;left:646px;top:290px;width:1px;height:15px;background:#e3e3e3;"></div>
<div class="t c" style="left:660.10px;top:288.77px;font-size:14.45px;color:#444;transform:scaleX(0.9028);">'Movies'</div>
<div class="t c" style="left:1275.90px;top:286.07px;font-size:13.38px;color:#999;transform:scaleX(0.8451);">7 results</div>
<div class="t c" style="left:613.20px;top:340.07px;font-size:14.45px;color:#555;transform:scaleX(0.9080);">Name</div>
<div class="t c" style="left:893.40px;top:340.07px;font-size:14.45px;color:#555;transform:scaleX(0.9225);">Location</div>
<div class="t c" style="left:1143.30px;top:340.07px;font-size:14.45px;color:#555;transform:scaleX(0.8716);">Size</div>
<div class="t c" style="left:1230.70px;top:340.07px;font-size:14.45px;color:#555;transform:scaleX(0.9129);">Type</div>
<div style="position:absolute;left:561px;top:364px;width:766px;height:1px;background:#e6e6e6;"></div>
<div style="position:absolute;left:573px;top:386px;width:24px;height:12px;background:radial-gradient(ellipse 20% 55% at 38% 88%,#080604 55%,rgba(8,6,4,0) 100%),radial-gradient(ellipse 10% 22% at 37% 30%,#1a1410 50%,rgba(0,0,0,0) 100%),linear-gradient(90deg,#221c12 0%,#3a3428 22%,#5e5650 48%,#6e665e 62%,#3a2e20 78%,#6a5e50 100%);border-radius:2.5px;"></div>
<div class="t c" style="left:613.20px;top:384.32px;font-size:14.98px;color:#1a1a1a;transform:scaleX(0.8907);"><span style="color:#2866d6">The Omen</span> III - <span style="color:#2866d6">The</span> Final Conflict.m4v</div>
<div class="t c" style="left:893.40px;top:384.32px;font-size:14.98px;color:#555;transform:scaleX(0.9351);">/Main-Storage/Video/Movies-m4v</div>
<div class="t c" style="left:1143.20px;top:384.32px;font-size:14.98px;color:#555;transform:scaleX(0.8177);">1.23 GB</div>
<div class="t c" style="left:1230.90px;top:384.32px;font-size:14.98px;color:#555;transform:scaleX(0.9281);">m4v</div>
<svg style="position:absolute;left:573px;top:436px;" width="23" height="18" viewBox="0 0 23 18" fill="none"><path d="M0.5 1.8C0.5 1 1 0.5 1.8 0.5H7.4L9 2H21C21.8 2 22.5 2.6 22.5 3.4V16.4C22.5 17.2 21.9 17.8 21.1 17.8H1.9C1.1 17.8 0.5 17.2 0.5 16.4Z" fill="#ffa42a"/></svg>
<div class="t c" style="left:613.20px;top:436.32px;font-size:14.98px;color:#1a1a1a;transform:scaleX(0.8863);"><span style="color:#2866d6">The Omen</span> III - <span style="color:#2866d6">The</span> Final Conflict</div>
<div class="t c" style="left:893.40px;top:436.32px;font-size:14.98px;color:#555;transform:scaleX(0.9193);">/Main-Storage/Video/DVD</div>
<div class="t c" style="left:1143.20px;top:436.32px;font-size:14.98px;color:#555;transform:scaleX(0.7737);">4.1 kB</div>
<div class="t c" style="left:1230.90px;top:436.32px;font-size:14.98px;color:#555;transform:scaleX(0.9990);">/</div>
<div style="position:absolute;left:573px;top:490px;width:24px;height:12px;background:radial-gradient(ellipse 12% 40% at 30% 45%,#8a7a70 0%,rgba(0,0,0,0) 100%),linear-gradient(90deg,#1c1210,#2e1c18 50%,#1a1210);border-radius:2.5px;"></div>
<div class="t c" style="left:613.20px;top:488.32px;font-size:14.98px;color:#1a1a1a;transform:scaleX(0.8862);"><span style="color:#2866d6">The Omen</span>.m4v</div>
<div class="t c" style="left:893.40px;top:488.32px;font-size:14.98px;color:#555;transform:scaleX(0.9351);">/Main-Storage/Video/Movies-m4v</div>
<div class="t c" style="left:1143.20px;top:488.32px;font-size:14.98px;color:#555;transform:scaleX(0.8758);">2.29 GB</div>
<div class="t c" style="left:1230.90px;top:488.32px;font-size:14.98px;color:#555;transform:scaleX(0.9281);">m4v</div>
<div style="position:absolute;left:573px;top:542px;width:24px;height:12px;background:radial-gradient(ellipse 16% 45% at 30% 55%,#7a5a48 0%,rgba(0,0,0,0) 100%),radial-gradient(ellipse 16% 45% at 66% 50%,#6a4c3a 0%,rgba(0,0,0,0) 100%),linear-gradient(90deg,#2e2018,#3e2c22 50%,#2a1c16);border-radius:2.5px;"></div>
<div class="t c" style="left:613.20px;top:540.32px;font-size:14.98px;color:#1a1a1a;transform:scaleX(0.8906);"><span style="color:#2866d6">The Omen</span> II - Damien.m4v</div>
<div class="t c" style="left:893.40px;top:540.32px;font-size:14.98px;color:#555;transform:scaleX(0.9351);">/Main-Storage/Video/Movies-m4v</div>
<div class="t c" style="left:1143.20px;top:540.32px;font-size:14.98px;color:#555;transform:scaleX(0.8177);">1.29 GB</div>
<div class="t c" style="left:1230.90px;top:540.32px;font-size:14.98px;color:#555;transform:scaleX(0.9281);">m4v</div>
<svg style="position:absolute;left:573px;top:592px;" width="23" height="18" viewBox="0 0 23 18" fill="none"><path d="M0.5 1.8C0.5 1 1 0.5 1.8 0.5H7.4L9 2H21C21.8 2 22.5 2.6 22.5 3.4V16.4C22.5 17.2 21.9 17.8 21.1 17.8H1.9C1.1 17.8 0.5 17.2 0.5 16.4Z" fill="#ffa42a"/></svg>
<div class="t c" style="left:613.20px;top:592.32px;font-size:14.98px;color:#1a1a1a;transform:scaleX(0.8842);"><span style="color:#2866d6">The Omen</span> II - Damien</div>
<div class="t c" style="left:893.40px;top:592.32px;font-size:14.98px;color:#555;transform:scaleX(0.9193);">/Main-Storage/Video/DVD</div>
<div class="t c" style="left:1143.20px;top:592.32px;font-size:14.98px;color:#555;transform:scaleX(0.7737);">4.1 kB</div>
<div class="t c" style="left:1230.90px;top:592.32px;font-size:14.98px;color:#555;transform:scaleX(0.9990);">/</div>
<svg style="position:absolute;left:573px;top:644px;" width="23" height="18" viewBox="0 0 23 18" fill="none"><path d="M0.5 1.8C0.5 1 1 0.5 1.8 0.5H7.4L9 2H21C21.8 2 22.5 2.6 22.5 3.4V16.4C22.5 17.2 21.9 17.8 21.1 17.8H1.9C1.1 17.8 0.5 17.2 0.5 16.4Z" fill="#ffa42a"/></svg>
<div class="t c" style="left:613.20px;top:644.32px;font-size:14.98px;color:#1a1a1a;transform:scaleX(0.8750);"><span style="color:#2866d6">The Omen</span></div>
<div class="t c" style="left:893.40px;top:644.32px;font-size:14.98px;color:#555;transform:scaleX(0.9193);">/Main-Storage/Video/DVD</div>
<div class="t c" style="left:1143.20px;top:644.32px;font-size:14.98px;color:#555;transform:scaleX(0.7737);">4.1 kB</div>
<div class="t c" style="left:1230.90px;top:644.32px;font-size:14.98px;color:#555;transform:scaleX(0.9990);">/</div>
<svg style="position:absolute;left:573px;top:696px;" width="23" height="18" viewBox="0 0 23 18" fill="none"><path d="M0.5 1.8C0.5 1 1 0.5 1.8 0.5H7.4L9 2H21C21.8 2 22.5 2.6 22.5 3.4V16.4C22.5 17.2 21.9 17.8 21.1 17.8H1.9C1.1 17.8 0.5 17.2 0.5 16.4Z" fill="#ffa42a"/></svg>
<div class="t c" style="left:613.20px;top:696.32px;font-size:14.98px;color:#1a1a1a;transform:scaleX(0.8832);"><span style="color:#2866d6">The</span> Pious Bird Of Good <span style="color:#2866d6">Omen</span></div>
<div class="t c" style="left:893.40px;top:696.32px;font-size:14.98px;color:#555;transform:scaleX(0.9066);">/Main-Storage/Music/MusicLibrary/Fl...</div>
<div class="t c" style="left:1143.20px;top:696.32px;font-size:14.98px;color:#555;transform:scaleX(0.7737);">4.1 kB</div>
<div class="t c" style="left:1230.90px;top:696.32px;font-size:14.98px;color:#555;transform:scaleX(0.9990);">/</div>
</body></html>
